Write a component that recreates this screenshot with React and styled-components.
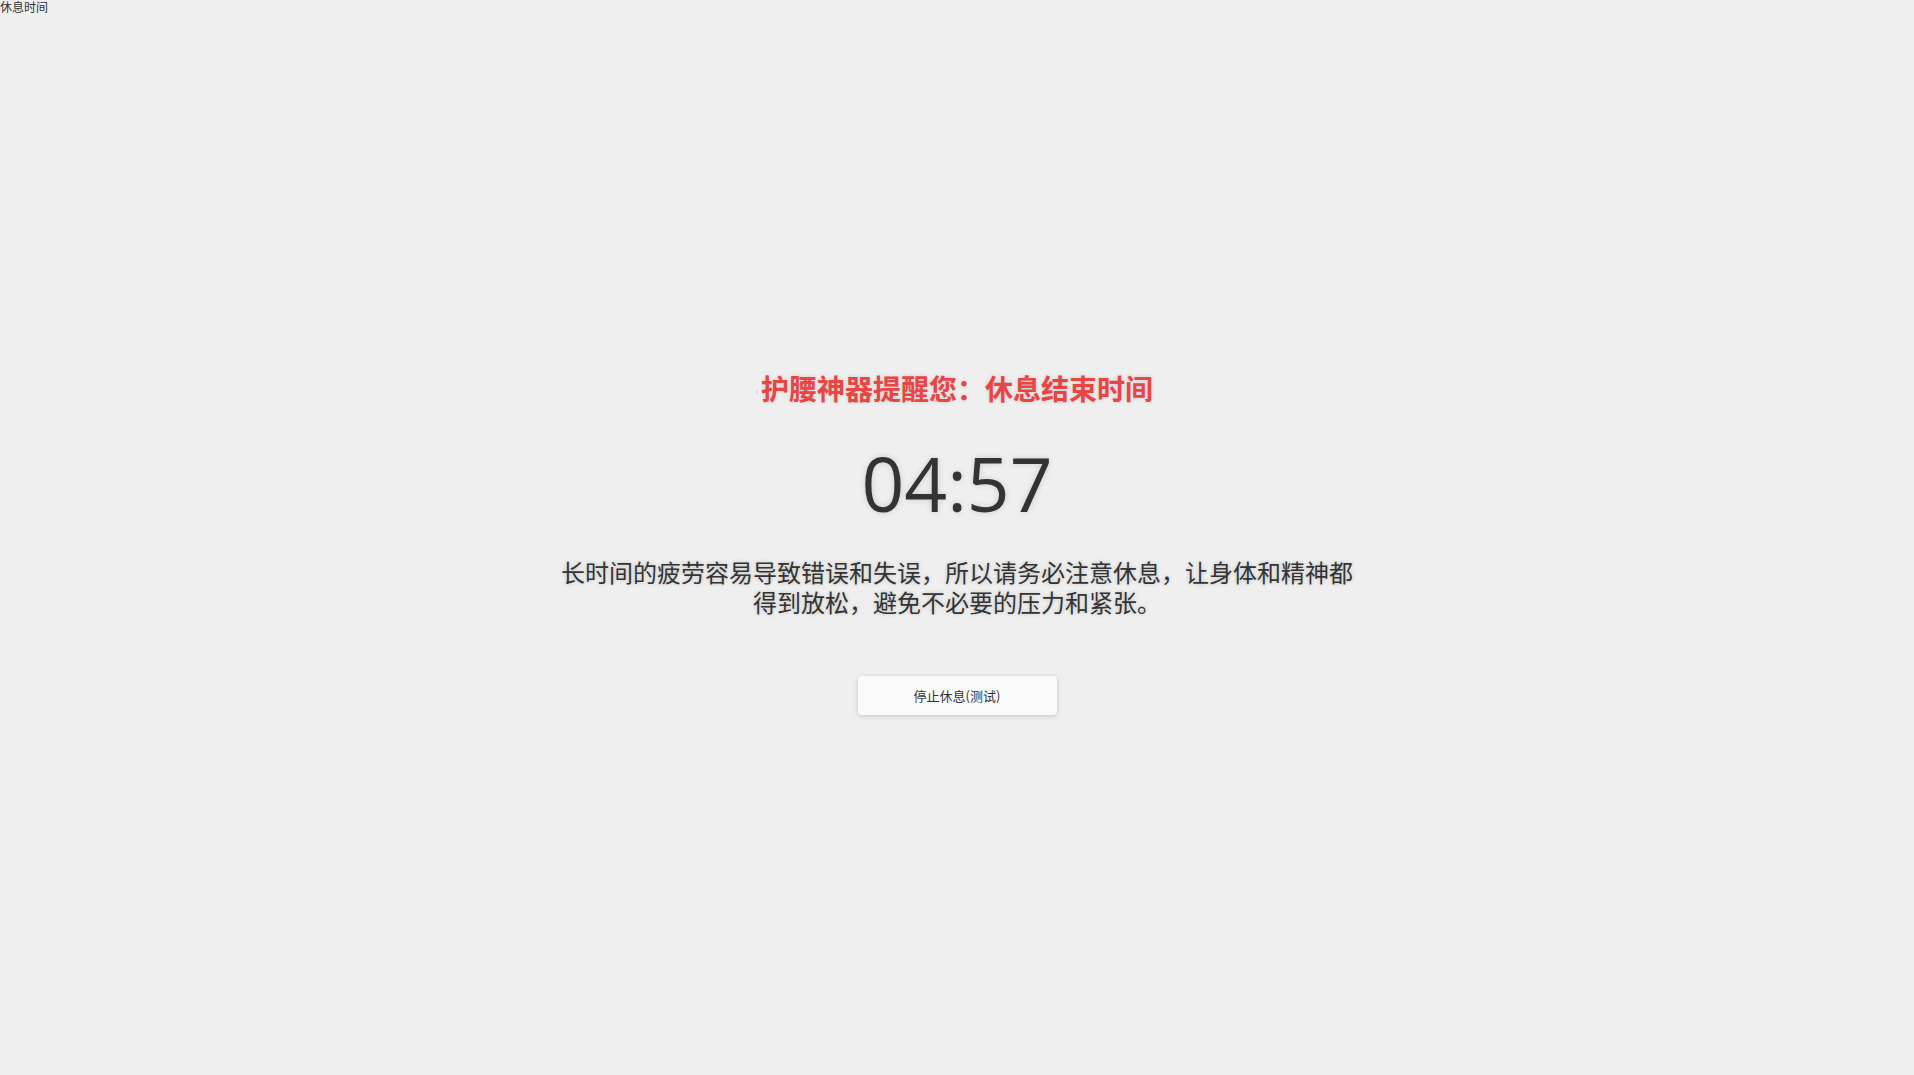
import styled, { createGlobalStyle } from 'styled-components'

const GlobalStyle = createGlobalStyle`
  html, body {
    margin: 0;
    padding: 0;
    background: #efefef;
    font-family: "Noto Sans", "Noto Sans CJK SC", sans-serif;
    color: #333;
  }
`

const Page = styled.div`
  min-height: 100vh;
  display: flex;
  flex-direction: column;
`

const TopLabel = styled.div`
  font-size: 12px;
  line-height: 16px;
  color: #333;
`

const Center = styled.main`
  flex: 1;
  display: flex;
  flex-direction: column;
  align-items: center;
  justify-content: center;
  padding-bottom: 8px;
`

const Title = styled.h1`
  margin: 0;
  font-size: 28px;
  line-height: 40px;
  font-weight: 700;
  color: #e84545;
  text-shadow: 0 0 4px rgba(0, 0, 0, 0.15);
`

const Countdown = styled.div`
  margin-top: 24px;
  font-family: "Open Sans", "Noto Sans", sans-serif;
  font-size: 75px;
  line-height: 100px;
  color: #333;
  text-shadow: 0 0 6px rgba(0, 0, 0, 0.15);
`

const Message = styled.p`
  margin: 25px 0 0;
  max-width: 800px;
  text-align: center;
  font-size: 24px;
  line-height: 30px;
  color: #333;
  text-shadow: 0 0 4px rgba(0, 0, 0, 0.2);
`

const StopButton = styled.button`
  margin-top: 58px;
  width: 199px;
  height: 39px;
  border: none;
  border-radius: 4px;
  background: #fafafa;
  box-shadow: 0 1px 5px rgba(0, 0, 0, 0.18);
  font-family: "Noto Sans CJK SC", sans-serif;
  font-size: 13px;
  color: #333;
  cursor: pointer;
`

export default function App() {
  return (
    <Page>
      <GlobalStyle />
      <TopLabel>休息时间</TopLabel>
      <Center>
        <Title>护腰神器提醒您：休息结束时间</Title>
        <Countdown>04:57</Countdown>
        <Message>
          长时间的疲劳容易导致错误和失误，所以请务必注意休息，让身体和精神都得到放松，避免不必要的压力和紧张。
        </Message>
        <StopButton>停止休息(测试)</StopButton>
      </Center>
    </Page>
  )
}
